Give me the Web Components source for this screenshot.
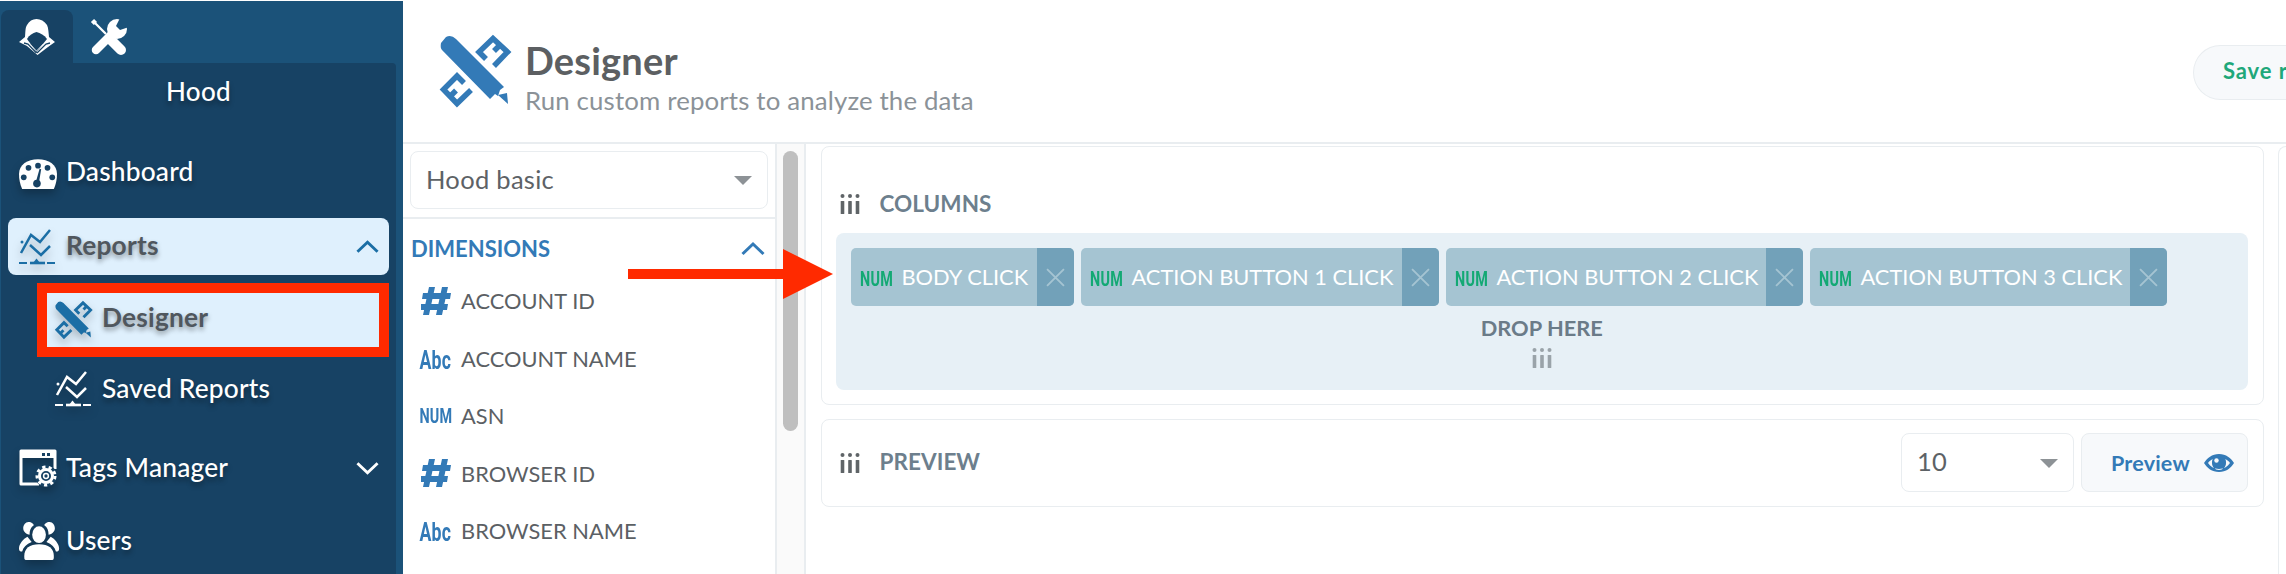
<!DOCTYPE html>
<html><head><meta charset="utf-8"><title>Designer</title>
<style>html,body{margin:0;padding:0;background:#fff;overflow:hidden}body{width:2286px;height:574px;font-family:Lato,"Liberation Sans",sans-serif}</style>
</head><body>
<designer-app></designer-app>
<script>
const ICONS={
hood:'<svg viewBox="0 0 36 36"><path fill="currentColor" d="M17.5 0c4 0 8 2 10.500 6 1.500 3 1.500 8 2 12l6 5-7 5-10.500 8L8 27l-8-4 6-5c.5-4 0-9 2-12 2-4 5.500-6 9.500-6z"/><path fill="#174264" d="M17.500 13c-4 1-7 3-9.500 7l9.500 13L28 20c-3-4-6.500-6-10.500-7z"/><path fill="none" stroke="#174264" stroke-width="1.300" d="M5 24l4 1 8.500 9M31 24l-4 1-9 9"/><path fill="none" stroke="#cfd9e1" stroke-width=".9" d="M11 25l6.500 7L24 25"/></svg>',
tools:'<svg viewBox="0 0 36 36"><path fill="none" stroke="currentColor" stroke-width="2.300" d="M3 3l12 12"/><path fill="none" stroke="currentColor" stroke-width="4.500" d="M1.500 1.500l3 3"/><path fill="none" stroke="currentColor" stroke-width="10" stroke-linecap="round" d="M20 21l10 10"/><path fill="none" stroke="currentColor" stroke-width="8.500" stroke-linecap="round" d="M5 31l17-17"/><circle cx="26" cy="10" r="10" fill="currentColor"/><path fill="#1b5279" d="M29-1l-4 8 4 4 9-3V-1z"/></svg>',
gauge:'<svg viewBox="0 0 36 36"><path fill="currentColor" d="M0 20C0 11 8 6 18 6s18 5 18 14c0 5-1 10-3 14H3C1 30 0 25 0 20z"/><g fill="#174264"><circle cx="18" cy="12" r="2.700"/><circle cx="9" cy="14" r="2.700"/><circle cx="27" cy="14" r="2.700"/><circle cx="4.500" cy="23" r="2.700"/><circle cx="31.500" cy="23" r="2.700"/><circle cx="17" cy="29" r="3.600"/><path d="M19.500 15l1.500.5-2 12h-3z"/></g></svg>',
chart:'<svg viewBox="0 0 36 38" fill="none" stroke="currentColor" stroke-width="2.500"><path d="M2 25L12 7l9 7L31 2"/><path d="M11 17l11 10 9-9"/><circle cx="3" cy="14" r="1.500" fill="currentColor" stroke="none"/><path stroke-width="1.800" d="M0 35h8M28 35h8"/><path stroke-width="2.600" d="M11 35h15"/><path fill="currentColor" stroke="none" d="M14 35l3.500-4.500L21 35z"/></svg>',
design:'<svg viewBox="0 0 72 72"><path fill="currentColor" d="M1 8Q0 13 2 15L50 64l5-5 3 2 2-6 4-3L16 4Q11-1 6 2z"/><path fill="currentColor" d="M58 60l9-2 1 11z"/><g fill="none" stroke="currentColor" stroke-width="5.500" stroke-linejoin="miter"><path d="M46 24l-7-7L53 3.500 67.500 17 54 31"/><path d="M60 10l-6 6M53 3.500"/><path d="M24 48l-7-7L3.500 54.500 17 68.500 31 55"/><path d="M10 61.500l6-6"/></g></svg>',
window:'<svg viewBox="0 0 38 38"><path fill="none" stroke="currentColor" stroke-width="3" stroke-linejoin="round" d="M20 35H2V2h34v18"/><rect x="2" y="2" width="34" height="7" fill="currentColor"/><g fill="#174264"><rect x="23" y="4" width="3" height="3"/><rect x="28" y="4" width="3" height="3"/></g><circle cx="27" cy="27" r="11" fill="#174264"/><circle cx="27" cy="27" r="6.500" fill="none" stroke="currentColor" stroke-width="3"/><circle cx="27" cy="27" r="9" fill="none" stroke="currentColor" stroke-width="3" stroke-dasharray="3.200 3.200"/><circle cx="27" cy="27" r="2.400" fill="none" stroke="currentColor" stroke-width="1.500"/></svg>',
users:'<svg viewBox="0 0 38 36" fill="currentColor"><ellipse cx="19" cy="12" rx="6.500" ry="8"/><path d="M7 36c-2 0-2-1-2-4 0-7 5-11 14-11s14 4 14 11c0 3 0 4-2 4z"/><path d="M9 0c3 0 5 2 5 3-3 2-4 5-4 9-2 0-6-2-6-6 0-3 2-6 5-6zM29 0c-3 0-5 2-5 3 3 2 4 5 4 9 2 0 6-2 6-6 0-3-2-6-5-6zM8 14l4 5C7 21 4 24 3 28c-2 0-3-1-3-3 0-4 4-9 8-11zM30 14l-4 5c5 2 8 5 9 9 2 0 3-1 3-3 0-4-4-9-8-11z"/></svg>',
hash:'<svg viewBox="0 0 30 28" fill="currentColor"><path d="M8 0h6l-6 28H2zM21 0h6l-6 28h-6z"/><path d="M2 6h28l-1 6H1zM0 17h27l-1 6H0z"/></svg>',
grip:'<svg viewBox="0 0 20 20" fill="currentColor"><circle cx="2.500" cy="2" r="2"/><circle cx="10" cy="2" r="2"/><circle cx="17.500" cy="2" r="2"/><rect x=".7" y="7" width="3.600" height="13" rx=".6"/><rect x="8.200" y="7" width="3.600" height="13" rx=".6"/><rect x="15.700" y="7" width="3.600" height="13" rx=".6"/></svg>',
up:'<svg viewBox="0 0 24 13" fill="none" stroke="currentColor" stroke-width="3"><path d="M1.500 12L12 2l10.500 10"/></svg>',
down:'<svg viewBox="0 0 24 13" fill="none" stroke="currentColor" stroke-width="3"><path d="M1.500 1L12 11 22.500 1"/></svg>',
caret:'<svg viewBox="0 0 18 9" fill="currentColor"><path d="M0 0h18L9 9z"/></svg>',
eye:'<svg viewBox="0 0 30 18"><path fill="currentColor" fill-rule="evenodd" d="M15 0c7 0 12 4 15 9-3 5-8 9-15 9S3 14 0 9c3-5 8-9 15-9zM4 9c2 3 6 6 11 6s9-3 11-6c-1-2-3-3-5-4 1 1 1 2 1 4 0 4-3 7-7 7s-7-3-7-7c0-2 0-3 1-4-2 1-4 2-5 4z"/><circle cx="12.500" cy="6.500" r="2.200" fill="#f7f9fb"/></svg>',
x:'<svg viewBox="0 0 18 18" fill="none" stroke="currentColor" stroke-width="1.800"><path d="M1 1l16 16M17 1L1 17"/></svg>'
};
function def(tag,html){customElements.define(tag,class extends HTMLElement{constructor(){super();this.attachShadow({mode:'open'}).innerHTML=html;}});}
const FONT='font-family:Lato,"Liberation Sans",sans-serif;';
customElements.define('app-icon',class extends HTMLElement{
 constructor(){super();this.attachShadow({mode:'open'})}
 connectedCallback(){this.shadowRoot.innerHTML='<style>:host{display:inline-flex;flex:none}svg{display:block;width:100%;height:100%;overflow:visible}</style>'+ICONS[this.getAttribute('name')];}
});
def('nav-item',`<style>
:host{display:flex;align-items:center;height:56px;box-sizing:border-box;position:relative;color:#fff;font-size:26.300px;font-weight:500;text-shadow:0 4px 5px rgba(0,0,0,.35);letter-spacing:.2px;padding-left:18px;padding-right:10px;margin-top:var(--mt,0);margin-left:var(--ml,0);margin-right:var(--mr,7px)}
:host([active]){background:#dff0fd;color:#50575e;font-weight:700;border-radius:8px;text-shadow:0 3px 5px rgba(0,0,0,.4)}
:host([framed]){border-radius:0}
:host([framed])::after{content:"";position:absolute;inset:-10px;border:10px solid #ff2a00;pointer-events:none}
.i{width:37px;height:38px;display:flex;margin-right:10px;flex:none;filter:drop-shadow(0 5px 4px rgba(0,0,0,.25))}
.t{flex:1;white-space:nowrap;padding-bottom:3px}
:host([active]) .t{padding-bottom:4px}
:host([framed]) .t{padding-bottom:6px}
::slotted([slot=end]){width:23px;height:13px;margin-right:0}
</style><span class="i"><slot name="icon"></slot></span><span class="t"><slot></slot></span><slot name="end"></slot>`);
def('side-bar',`<style>
:host{display:flex;flex-direction:column;width:403px;height:574px;background:#1b5279;flex:none;box-sizing:border-box;padding-top:1px;border-top:1px solid #fff;color:#fff}
.tabs{display:flex;padding-top:8px;padding-left:1px;height:53px}
.tab{width:72px;height:53px;border-radius:8px 8px 0 0;display:flex;align-items:center;justify-content:center;box-sizing:border-box}
.tab.on{background:#174264}
.tab app-icon{width:36px;height:36px}
.panel{flex:1;background:#174264;margin-left:1px;margin-right:7px;border-radius:0 4px 0 0;min-height:0}
.title{height:56px;display:flex;align-items:center;justify-content:center;${FONT}font-size:26px;font-weight:500;text-shadow:0 4px 5px rgba(0,0,0,.35);letter-spacing:.3px}
</style>
<div class="tabs"><div class="tab on"><app-icon name="hood"></app-icon></div><div class="tab"><app-icon name="tools"></app-icon></div></div>
<div class="panel"><div class="title">Hood</div><slot></slot></div>`);
def('page-header',`<style>
:host{display:flex;align-items:center;height:144px;box-sizing:border-box;border-bottom:2px solid #e9edf0;padding-left:37px;flex:none;position:relative;overflow:hidden}
.logo{width:72px;height:72px;color:#337ab7;margin-right:13px}
.txt{flex:1;padding-top:15px}
h1{margin:0;font-size:38px;line-height:38px;font-weight:700;color:#5c5f62;letter-spacing:.2px}
p{margin:4px 0 0;font-size:25.800px;line-height:34px;color:#8b9298;letter-spacing:.15px}
.save{width:150px;height:55px;box-sizing:border-box;border:1.500px solid #e9edf0;border-right:0;border-radius:28px 0 0 28px;background:#f7f9fb;color:#1fa87a;font-weight:700;font-size:22px;padding:11px 0 0 29px;white-space:nowrap;margin-right:-57px;letter-spacing:.9px;overflow:hidden;margin-top:3px}
</style><app-icon class="logo" name="design"></app-icon><div class="txt"><h1>Designer</h1><p>Run custom reports to analyze the data</p></div><div class="save">Save report</div>`);
def('drop-select',`<style>
:host{display:flex;align-items:center;box-sizing:border-box;border:1.500px solid #e9edf0;border-radius:8px;background:#fff;color:#5d6266;font-size:25.500px;font-weight:400;height:58px;padding:0 15px 3px 15px}
.v{flex:1;letter-spacing:.3px}
app-icon{width:18px;height:9px;color:#8d9296;margin-top:4px}
</style><span class="v"><slot></slot></span><app-icon name="caret"></app-icon>`);
def('field-row',`<style>
:host{display:flex;align-items:center;height:57.500px;padding-left:17px;font-size:21.800px;color:#5b6064;letter-spacing:.05px}
.k{width:31px;margin-right:10px;display:flex;justify-content:center;color:#337ab7;flex:none}
.k app-icon{width:30px;height:28px}
b{font-family:Roboto,"Liberation Sans",sans-serif;font-weight:700;font-size:20px;transform:scaleX(.72);display:inline-block;white-space:nowrap;letter-spacing:.3px}
b.a{font-size:26px;padding-top:3px;transform:scaleX(.68)}
</style><span class="k" id="k"></span><slot></slot>`);
def('field-list',`<style>
:host{display:flex;flex-direction:column;width:372px;flex:none;box-sizing:border-box;height:100%;overflow:hidden}
.sel{padding:7px 7px 8px 7px;border-bottom:2px solid #e9edf0}
.h{display:flex;align-items:center;justify-content:space-between;height:53px;padding:5px 10px 0 8px;color:#337ab7;font-weight:700;font-size:22px;box-sizing:border-box}
.h app-icon{width:24px;height:13px}
</style><div class="sel"><drop-select>Hood basic</drop-select></div><div class="h"><span>DIMENSIONS</span><app-icon name="up"></app-icon></div><slot></slot>`);
def('scroll-track',`<style>
:host{display:block;width:31px;flex:none;box-sizing:border-box;background:#fafafa;border-left:2px solid #e9edf0;border-right:2px solid #e9edf0;padding:7px 6px 0}
div{height:280px;background:#bfbfbf;border-radius:8px}
</style><div></div>`);
def('section-card',`<style>
:host{display:block;box-sizing:border-box;border:1.500px solid #e9edf0;border-radius:8px;background:#fff;padding:0 15px 0 13.500px;position:relative}
.h{display:flex;align-items:center;box-sizing:border-box;height:var(--hh,86px);padding-top:var(--hp,28px);padding-left:4px}
.g{width:20px;height:20px;color:#5f6467;margin-right:20px}
.t{flex:1;color:#6d7f8d;font-weight:700;font-size:22.500px;letter-spacing:.05px;padding-bottom:2px}
</style><div class="h"><app-icon class="g" name="grip"></app-icon><span class="t"><slot name="title"></slot></span><slot name="tools"></slot></div><slot></slot>`);
def('drop-zone',`<style>
:host{display:block;box-sizing:border-box;height:157px;border-radius:8px;background:#e7f0f6;padding:15px 15px 0}
.c{display:flex;gap:7px}
.d{text-align:center;color:#6b7b88;font-weight:700;font-size:21.800px;line-height:26px;margin-top:9px}
.g{display:flex;margin:7px auto 0;width:20px;height:20px;color:#9aa3a9}
</style><div class="c"><slot></slot></div><div class="d">DROP HERE</div><app-icon class="g" name="grip"></app-icon>`);
def('field-chip',`<style>
:host{display:flex;align-items:stretch;height:58px;background:#a5c4d2;border-radius:5px;overflow:hidden;color:#fff;flex:none;width:var(--w)}
.n{color:#13a974;font-family:Roboto,"Liberation Sans",sans-serif;font-weight:700;font-size:20px;width:31px;margin:0 10px;display:flex;align-items:center;justify-content:center;padding-top:3px;transform:scaleX(.72);letter-spacing:.3px}
.t{flex:1;display:flex;align-items:center;font-size:21.800px;white-space:nowrap;letter-spacing:.02px;padding-bottom:1px}
.x{width:37px;flex:none;background:#72a1b9;display:flex;align-items:center;justify-content:center;color:#a5c4d2}
.x app-icon{width:19px;height:19px}
</style><span class="n">NUM</span><span class="t"><slot></slot></span><span class="x"><app-icon name="x"></app-icon></span>`);
def('action-button',`<style>
:host{display:flex;align-items:center;box-sizing:border-box;width:167px;height:59px;border:1.500px solid #e9edf0;border-radius:8px;background:#f7f9fb;color:#337ab7;font-weight:700;font-size:21.500px;padding-left:29px;letter-spacing:.2px}
app-icon{width:30px;height:18px;margin-left:14px}
</style><slot></slot><app-icon name="eye"></app-icon>`);
def('designer-app',`<style>
:host{display:flex;width:2286px;height:574px;overflow:hidden;position:relative;background:#fff;${FONT}}
.main{flex:1;min-width:0;display:flex;flex-direction:column}
.body{flex:1;display:flex;min-height:0}
.center{flex:1;min-width:0;display:flex;padding:2px 0 0 15px;gap:14px;overflow:hidden}
.stack{width:1443px;flex:none;display:flex;flex-direction:column;gap:14px}
.right{flex:1;border:1.500px solid #e9edf0;border-right:0;border-bottom:0;border-radius:8px 0 0 0}
.ps{width:173px;margin-right:7px;height:59px}
.tools{display:flex}
.arrow{position:absolute;left:628px;top:249px;width:205px;height:50px}
</style>
<side-bar>
 <nav-item style="--mt:25px;--mr:0px"><app-icon slot="icon" name="gauge"></app-icon>Dashboard</nav-item>
 <nav-item active style="--mt:18px;--ml:7px;height:57px;padding-left:11px"><app-icon slot="icon" name="chart" style="color:#1b6ea5"></app-icon>Reports<app-icon slot="end" name="up" style="color:#1b6ea5"></app-icon></nav-item>
 <nav-item active framed style="--mt:18px;--ml:46px;--mr:17px;height:54px;padding-left:8px"><app-icon slot="icon" name="design" style="color:#1b6ea5"></app-icon>Designer</nav-item>
 <nav-item style="--mt:14px;--ml:36px;--mr:0px"><app-icon slot="icon" name="chart"></app-icon>Saved Reports</nav-item>
 <nav-item style="--mt:23px"><app-icon slot="icon" name="window"></app-icon>Tags Manager<app-icon slot="end" name="down"></app-icon></nav-item>
 <nav-item style="--mt:17px"><app-icon slot="icon" name="users"></app-icon>Users</nav-item>
</side-bar>
<div class="main">
 <page-header></page-header>
 <div class="body">
  <field-list>
   <field-row kind="hash">ACCOUNT ID</field-row>
   <field-row kind="Abc">ACCOUNT NAME</field-row>
   <field-row kind="NUM">ASN</field-row>
   <field-row kind="hash">BROWSER ID</field-row>
   <field-row kind="Abc">BROWSER NAME</field-row>
  </field-list>
  <scroll-track></scroll-track>
  <div class="center">
   <div class="stack">
    <section-card style="height:259px"><span slot="title">COLUMNS</span>
     <drop-zone>
      <field-chip style="--w:223px">BODY CLICK</field-chip>
      <field-chip style="--w:358px">ACTION BUTTON 1 CLICK</field-chip>
      <field-chip style="--w:357px">ACTION BUTTON 2 CLICK</field-chip>
      <field-chip style="--w:357px">ACTION BUTTON 3 CLICK</field-chip>
     </drop-zone>
    </section-card>
    <section-card style="height:88px;--hh:85px;--hp:0px"><span slot="title">PREVIEW</span>
     <span slot="tools" class="tools"><drop-select class="ps">10</drop-select><action-button>Preview</action-button></span>
    </section-card>
   </div>
   <div class="right"></div>
  </div>
 </div>
</div>
<svg class="arrow" viewBox="0 0 205 50"><path fill="#ff2a00" d="M0 20h155V0l50 25-50 25V30H0z"/></svg>`);
document.querySelector('designer-app').shadowRoot.querySelectorAll('field-row').forEach(r=>{
 const k=r.shadowRoot.getElementById('k'),v=r.getAttribute('kind');
 k.innerHTML=v==='hash'?'<app-icon name="hash"></app-icon>':'<b class="'+(v==='Abc'?'a':'')+'">'+v+'</b>';
});
</script>
</body></html>
